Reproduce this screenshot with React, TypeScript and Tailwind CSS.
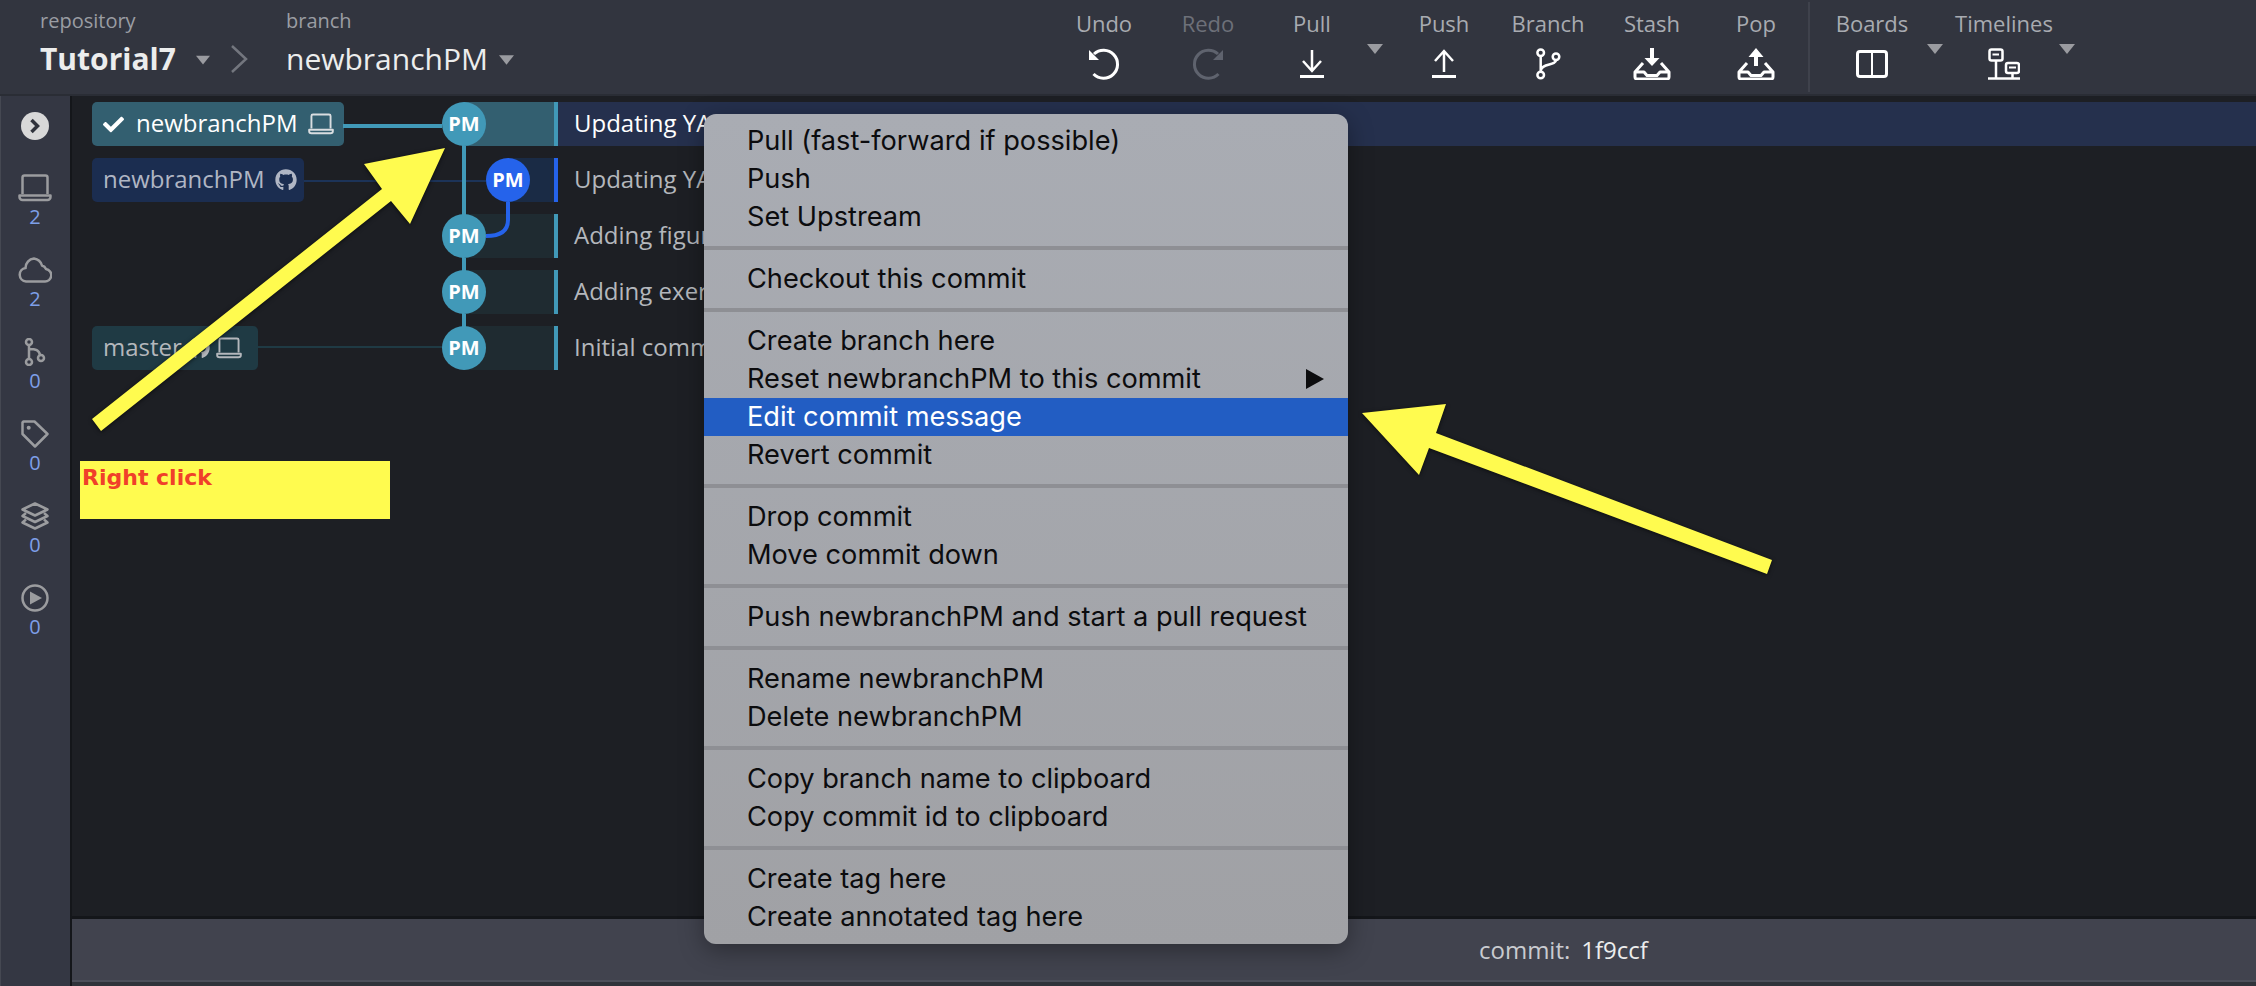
import { FaCheck, FaGithub } from "react-icons/fa";

function Caret({ className }: { className: string }) {
  return (
    <svg viewBox="0 0 16 10" className={className}>
      <path d="M0 0H16L8 10Z" fill="currentColor" />
    </svg>
  );
}

function LaptopIcon({ className }: { className: string }) {
  return (
    <svg viewBox="0 0 34 28" fill="none" stroke="currentColor" strokeWidth="2.5" className={className}>
      <path d="M4.5 20V3.5a2 2 0 0 1 2-2h21a2 2 0 0 1 2 2V20" />
      <path d="M1.5 21.5h31v1.5a3 3 0 0 1-3 3h-25a3 3 0 0 1-3-3z" strokeLinejoin="round" />
    </svg>
  );
}

const tray = "M11 15 3 24v5a2 2 0 0 0 2 2h30a2 2 0 0 0 2-2v-5l-8-9M3.5 24H12l3 3.5h10l3-3.5h8.5";

const toolIcons: Record<string, React.ReactNode> = {
  Undo: (
    <svg viewBox="0 0 32 32" fill="none" stroke="currentColor" strokeWidth="3" className="w-8 h-8 text-white">
      <path d="M6 6A14 14 0 1 1 5.500 26" />
      <path d="M1 2V12H11Z" fill="currentColor" stroke="none" />
    </svg>
  ),
  Redo: (
    <svg viewBox="0 0 32 32" fill="none" stroke="currentColor" strokeWidth="3" className="w-8 h-8 text-[#5f636e]">
      <path d="M26 6A14 14 0 1 0 26.500 26" />
      <path d="M31 2V12H21Z" fill="currentColor" stroke="none" />
    </svg>
  ),
  Pull: (
    <svg viewBox="0 0 32 32" fill="none" stroke="currentColor" strokeWidth="2.5" className="w-8 h-8 text-white">
      <path d="M16 2V23M7 13l9 10 9-10" />
      <path d="M4 28.500H28" strokeWidth="3" />
    </svg>
  ),
  Push: (
    <svg viewBox="0 0 32 32" fill="none" stroke="currentColor" strokeWidth="2.5" className="w-8 h-8 text-white">
      <path d="M16 24V3M7 13l9-10 9 10" />
      <path d="M4 28.500H28" strokeWidth="3" />
    </svg>
  ),
  Branch: (
    <svg viewBox="0 0 32 32" fill="none" stroke="currentColor" strokeWidth="2.500" className="w-8 h-8 text-white">
      <circle cx="8.700" cy="4.700" r="3.300" />
      <circle cx="24" cy="8.700" r="3.300" />
      <circle cx="8.700" cy="27" r="3.300" />
      <path d="M8.700 8V23.500M24 12C24 18 9 15 8.700 23" />
    </svg>
  ),
  Stash: (
    <svg viewBox="0 0 40 32" fill="none" stroke="currentColor" strokeWidth="3" className="w-10 h-8 text-white">
      <path d={tray} strokeLinejoin="round" />
      <path d="M18 0H22V10H27.500L20 18 12.500 10H18Z" fill="currentColor" stroke="none" />
    </svg>
  ),
  Pop: (
    <svg viewBox="0 0 40 32" fill="none" stroke="currentColor" strokeWidth="3" className="w-10 h-8 text-white">
      <path d={tray} strokeLinejoin="round" />
      <path d="M18 18H22V9H27.500L20 0 12.500 9H18Z" fill="currentColor" stroke="none" />
    </svg>
  ),
  Boards: (
    <svg viewBox="0 0 32 32" fill="none" stroke="currentColor" strokeWidth="3" className="w-8 h-8 text-white">
      <rect x="1.500" y="3.500" width="29" height="25" rx="2.500" />
      <path d="M16 3V29" strokeWidth="2" />
    </svg>
  ),
  Timelines: (
    <svg viewBox="0 0 32 32" fill="none" stroke="currentColor" strokeWidth="2.500" className="w-8 h-8 text-white">
      <rect x="1.500" y="1.500" width="13" height="11" rx="2" />
      <rect x="18" y="15" width="13" height="10" rx="2" />
      <path d="M4.500 6.500H11M21 19.500H28" strokeWidth="2" />
      <path d="M8 12V30M24.500 25V30M0 30.500H32" />
    </svg>
  ),
};

function ToolButton({ label, dim }: { label: string; dim?: boolean }) {
  return (
    <div className="w-[104px] h-[94px] flex flex-col items-center pt-[8px]">
      <span className={`text-[22px] leading-[30px] ${dim ? "text-[#6d7079]" : "text-[#a8abb1]"}`}>{label}</span>
      <span className="h-8 mt-[10px] flex items-center justify-center">{toolIcons[label]}</span>
    </div>
  );
}

function ToolCaret() {
  return (
    <div className="w-7 h-[94px] flex pl-[3px] pt-[44px]">
      <Caret className="w-4 h-[10px] text-[#9a9ba0]" />
    </div>
  );
}

function Header() {
  return (
    <header className="h-[96px] shrink-0 flex bg-[#32353f] border-b-2 border-[#2a2d35] pl-10 pr-[172px]">
      <div className="w-[246px] flex flex-col pt-[7px]">
        <span className="text-[20px] leading-[28px] text-[#9a9da3]">repository</span>
        <div className="flex items-center h-[48px] relative">
          <span className="text-[30px] font-bold text-[#eceded] leading-[40px]">Tutorial7</span>
          <Caret className="w-[14px] h-[10px] ml-[20px] mt-[2px] text-[#9a9ba0]" />
          <svg viewBox="0 0 18 30" fill="none" stroke="#73767e" strokeWidth="2.500" className="w-[18px] h-[30px] ml-[20px]">
            <path d="M2 2 16 15 2 28" />
          </svg>
        </div>
      </div>
      <div className="flex flex-col pt-[7px]">
        <span className="text-[20px] leading-[28px] text-[#9a9da3]">branch</span>
        <div className="flex items-center h-[48px]">
          <span className="text-[30px] text-[#eceded] leading-[40px]">newbranchPM</span>
          <Caret className="w-[15px] h-[10px] ml-[11px] mt-[2px] text-[#9a9ba0]" />
        </div>
      </div>
      <div className="ml-auto flex">
        <ToolButton label="Undo" />
        <ToolButton label="Redo" dim />
        <ToolButton label="Pull" />
        <ToolCaret />
        <ToolButton label="Push" />
        <ToolButton label="Branch" />
        <ToolButton label="Stash" />
        <ToolButton label="Pop" />
        <div className="w-[2px] h-[90px] mt-[2px] bg-[#3f424c] mr-[10px]" />
        <ToolButton label="Boards" />
        <ToolCaret />
        <ToolButton label="Timelines" />
        <ToolCaret />
      </div>
    </header>
  );
}

function SideItem({ icon, count }: { icon: React.ReactNode; count: number }) {
  return (
    <div className="h-[82px] flex flex-col items-center">
      <div className="h-[30px] flex items-center justify-center text-[#9b9c9f]">{icon}</div>
      <span className="text-[20px] leading-[28px] text-[#7e9fe8]">{count}</span>
    </div>
  );
}

function Sidebar() {
  return (
    <aside className="w-[72px] shrink-0 bg-[#343743] border-l border-[#454852] border-r-2 border-r-[#14161a] pr-[1px] flex flex-col items-center pt-[16px]">
      <div className="w-7 h-7 rounded-full bg-[#d8d8d8] flex items-center justify-center mb-[33px]">
        <svg viewBox="0 0 12 16" fill="none" stroke="#30333c" strokeWidth="3.500" className="w-3 h-4">
          <path d="M2.500 2 8.500 8 2.500 14" />
        </svg>
      </div>
      <SideItem icon={<LaptopIcon className="w-[34px] h-[28px]" />} count={2} />
      <SideItem
        icon={
          <svg viewBox="0 0 34 26" fill="none" stroke="currentColor" strokeWidth="2.500" className="w-[34px] h-[26px]">
            <path d="M8 24.500H26.500A6.300 6.300 0 0 0 28 12 6 6 0 0 0 24 8.500 10 10 0 0 0 16 1.500 9.500 9.500 0 0 0 7.500 11 6.800 6.800 0 0 0 8 24.500Z" />
          </svg>
        }
        count={2}
      />
      <SideItem
        icon={
          <svg viewBox="0 0 22 28" fill="none" stroke="currentColor" strokeWidth="2.500" className="w-[22px] h-[28px]">
            <circle cx="5" cy="4" r="3" />
            <circle cx="5" cy="24" r="3" />
            <circle cx="17" cy="20" r="3" />
            <path d="M5 7V21M5 11C12 11 15 12 16 17" />
          </svg>
        }
        count={0}
      />
      <SideItem
        icon={
          <svg viewBox="0 0 28 28" fill="none" stroke="currentColor" strokeWidth="2.500" className="w-7 h-7">
            <path d="M2.500 1.500H13.500L26.500 14 14 26.500 1.500 14V2.500Z" strokeLinejoin="round" />
            <circle cx="7.700" cy="7.700" r="2" fill="currentColor" stroke="none" />
          </svg>
        }
        count={0}
      />
      <SideItem
        icon={
          <svg viewBox="0 0 28 28" fill="none" stroke="currentColor" strokeWidth="2.500" className="w-7 h-7" strokeLinejoin="round">
            <path d="M14 1.500 26.500 7.500 14 13.500 1.500 7.500Z" />
            <path d="M5 11 1.500 14 14 20 26.500 14 23 11" />
            <path d="M5 17.500 1.500 20.500 14 26.500 26.500 20.500 23 17.500" />
          </svg>
        }
        count={0}
      />
      <SideItem
        icon={
          <svg viewBox="0 0 28 28" fill="none" stroke="currentColor" strokeWidth="2.500" className="w-7 h-7">
            <circle cx="14" cy="14" r="12.500" />
            <path d="M9 7.500 21 14 9 20.500Z" fill="currentColor" stroke="none" />
          </svg>
        }
        count={0}
      />
    </aside>
  );
}

type Commit = {
  message: string;
  nodeBlue?: boolean;
  zone: string;
  accent: string;
  text: string;
  rowBg?: string;
  badge?: React.ReactNode;
};

const commits: Commit[] = [
  {
    message: "Updating YAML",
    zone: "bg-[#335f70]",
    accent: "bg-[#4199b8]",
    text: "text-white",
    rowBg: "bg-[#25304d]",
    badge: (
      <div className="w-[252px] h-11 rounded-[5px] bg-[#335f70] flex items-center pl-[11px] text-white">
        <FaCheck className="w-[21px] h-[21px]" />
        <span className="text-[24px] ml-[12px] pb-[2px]">newbranchPM</span>
        <LaptopIcon className="w-[26px] h-[22px] ml-[10px] text-[#d9dde0]" />
      </div>
    ),
  },
  {
    message: "Updating YAML",
    nodeBlue: true,
    zone: "bg-[#1a2b45]",
    accent: "bg-[#2563eb]",
    text: "text-[#b4b7bc]",
    badge: (
      <div className="w-[212px] h-11 rounded-[5px] bg-[#1b2d50] flex items-center pl-[11px] text-[#b0b6c4]">
        <span className="text-[24px] pb-[2px]">newbranchPM</span>
        <FaGithub className="w-[22px] h-[22px] ml-[10px]" />
      </div>
    ),
  },
  { message: "Adding figures", zone: "bg-[#1f2b31]", accent: "bg-[#4199b8]", text: "text-[#b4b7bc]" },
  { message: "Adding exercises", zone: "bg-[#1f2b31]", accent: "bg-[#4199b8]", text: "text-[#b4b7bc]" },
  {
    message: "Initial commit",
    zone: "bg-[#1f2b31]",
    accent: "bg-[#4199b8]",
    text: "text-[#b4b7bc]",
    badge: (
      <div className="w-[166px] h-11 rounded-[5px] bg-[#1f3a44] flex items-center pl-[11px] text-[#b4b7bc]">
        <span className="text-[24px] pb-[2px]">master</span>
        <FaGithub className="w-[22px] h-[22px] ml-[6px]" />
        <LaptopIcon className="w-[26px] h-[22px] ml-[6px]" />
      </div>
    ),
  },
];

function CommitRow({ commit }: { commit: Commit }) {
  return (
    <div className="h-11 flex">
      <div className="w-[370px] pl-5 shrink-0">{commit.badge}</div>
      <div className="w-[112px] relative shrink-0">
        <div className={`absolute top-0 bottom-0 right-0 ${commit.nodeBlue ? "left-[66px]" : "left-[22px]"} ${commit.zone}`} />
        <div
          className={`absolute top-0 w-11 h-11 rounded-full flex items-center justify-center text-white text-[20px] font-bold ${
            commit.nodeBlue ? "left-[44px] bg-[#2563eb]" : "left-0 bg-[#4199b8]"
          }`}
        >
          PM
        </div>
      </div>
      <div className={`w-1 shrink-0 ${commit.accent}`} />
      <div className={`flex-1 pl-4 pb-[2px] flex items-center text-[24px] ${commit.text} ${commit.rowBg ?? ""}`}>
        {commit.message}
      </div>
    </div>
  );
}

function Graph() {
  return (
    <div className="flex-1 relative pt-[6px] bg-[#1d1f24] min-h-0">
      <div className="relative flex flex-col gap-3">
        <svg viewBox="0 0 500 268" fill="none" className="absolute left-0 top-0 w-[500px] h-[268px]">
          <path d="M271 24H370" stroke="#4199b8" strokeWidth="4" />
          <path d="M232 79H414" stroke="#1c3358" strokeWidth="2" />
          <path d="M186 245H370" stroke="#1f3a44" strokeWidth="2" />
          <path d="M392 24V245" stroke="#4199b8" strokeWidth="4" />
        </svg>
        {commits.map((commit, i) => (
          <CommitRow key={i} commit={commit} />
        ))}
        <svg viewBox="0 0 500 268" fill="none" className="absolute left-0 top-0 w-[500px] h-[268px]">
          <path d="M392 44V58M392 100V114M392 156V170M392 212V226" stroke="#4199b8" strokeWidth="4" />
          <path d="M436 100V118Q436 134 414 134" stroke="#2563eb" strokeWidth="4" />
        </svg>
      </div>
    </div>
  );
}

function StatusBar() {
  return (
    <div className="shrink-0">
      <div className="h-[64px] bg-[#41434e] border-t-[3px] border-[#14161a] flex items-center pl-[1407px] text-[24px]">
        <span className="text-[#c9cbd0]">commit:</span>
        <span className="text-[#eceded] ml-[11px]">1f9ccf</span>
      </div>
      <div className="h-[2px] bg-[#4d4f5a]" />
      <div className="h-1 bg-[#30333a]" />
    </div>
  );
}

const menuGroups: string[][] = [
  ["Pull (fast-forward if possible)", "Push", "Set Upstream"],
  ["Checkout this commit"],
  ["Create branch here", "Reset newbranchPM to this commit", "Edit commit message", "Revert commit"],
  ["Drop commit", "Move commit down"],
  ["Push newbranchPM and start a pull request"],
  ["Rename newbranchPM", "Delete newbranchPM"],
  ["Copy branch name to clipboard", "Copy commit id to clipboard"],
  ["Create tag here", "Create annotated tag here"],
];

function ContextMenu() {
  return (
    <div className="absolute left-[704px] top-[114px] w-[644px] h-[830px] rounded-xl bg-gradient-to-b from-[#a9acb3] to-[#a0a1a5] py-2 shadow-[0_6px_24px_rgba(0,0,0,0.35)] font-['Inter',sans-serif] text-[27.2px] text-[#0c0c0e]">
      {menuGroups.map((group, g) => (
        <div key={g}>
          {g > 0 && <div className="h-1 my-[10px] bg-[#8e8f94]" />}
          {group.map((item) => (
            <div
              key={item}
              className={`h-[38px] pl-[43px] pr-6 flex items-center justify-between leading-none ${
                item === "Edit commit message" ? "bg-[#225dc3] text-white" : ""
              }`}
            >
              <span>{item}</span>
              {item.startsWith("Reset") && (
                <svg viewBox="0 0 18 20" className="w-[18px] h-5">
                  <path d="M0 0 18 10 0 20Z" fill="#0c0c0e" />
                </svg>
              )}
            </div>
          ))}
        </div>
      ))}
    </div>
  );
}

function Arrows() {
  return (
    <svg viewBox="0 0 2256 986" className="absolute inset-0 w-[2256px] h-[986px] pointer-events-none drop-shadow-[0_1px_2px_rgba(0,0,0,0.6)]">
      <path d="M445 148 364 164 382 189 92 419 101 431 391 201 410 224Z" fill="#fffb4f" />
      <path d="M1362 413 1446 404 1436 433 1772 560 1767 574 1429 448 1419 475Z" fill="#fffb4f" />
    </svg>
  );
}

export default function App() {
  return (
    <div className="relative w-[2256px] h-[986px] overflow-hidden flex flex-col font-['Open_Sans',sans-serif] bg-[#1d1f24]">
      <Header />
      <div className="flex-1 flex min-h-0">
        <Sidebar />
        <div className="flex-1 flex flex-col min-w-0">
          <Graph />
          <StatusBar />
        </div>
      </div>
      <ContextMenu />
      <Arrows />
      <div className="absolute left-[80px] top-[461px] w-[310px] h-[58px] bg-[#fffb4f] pl-[2px] pt-[1px] text-[22px] leading-[32px] font-bold text-[#f0402a] font-['DejaVu_Sans',sans-serif]">
        Right click
      </div>
    </div>
  );
}
